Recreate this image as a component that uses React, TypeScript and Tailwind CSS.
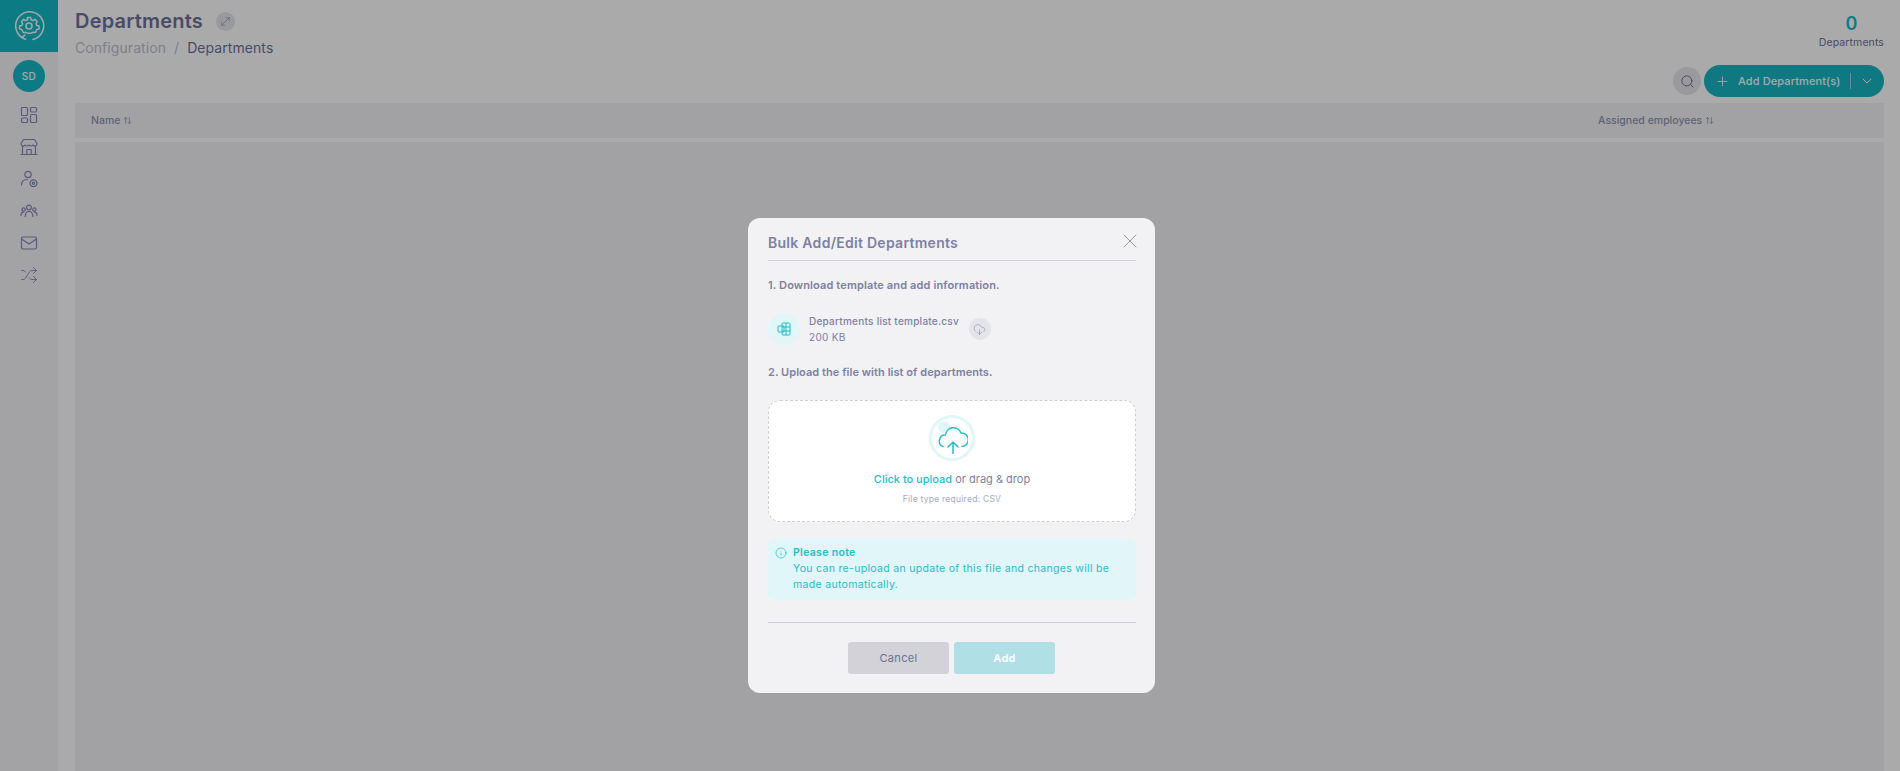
import { ArrowUpDown, ChevronDown, CloudDownload, Info, MoveDiagonal, Plus, Search, Shuffle, X } from 'lucide-react'

const font = { fontFamily: 'Inter, "Open Sans", sans-serif' }

function LogoIcon() {
  return (
    <svg width="32" height="32" viewBox="0 0 32 32" fill="none" stroke="#e4f4f5" strokeWidth="1.5" strokeLinecap="round" strokeLinejoin="round">
      <path d="M9 27.5A14 14 0 1 1 20 29.4" />
      <path d="M12 25l-3 2.6 3.6 1.8" />
      <path d="M14.3 7.5h3.4l.5 2.4 2 .9 2.1-1.3 2.4 2.4-1.3 2.1.8 2 2.4.5v3.2l-2.4.6-.8 2-1 1.2-2-.4-2.2 1h-3.6l-2.1-1-2 .4-1.2-1.2-.8-2-2.4-.6v-3.2l2.4-.5.8-2-1.3-2.1 2.4-2.4 2.1 1.3 2-.9z" transform="translate(16 16) scale(.95) translate(-16 -16.5)" />
      <circle cx="16" cy="16" r="3" />
    </svg>
  )
}

function NavIcon({ children }: { children: React.ReactNode }) {
  return (
    <svg width="18" height="18" viewBox="0 0 18 18" fill="none" stroke="#7c84b2" strokeWidth="1.2" strokeLinecap="round" strokeLinejoin="round">
      {children}
    </svg>
  )
}

function Sidebar() {
  return (
    <aside className="w-[58px] shrink-0 bg-[#eaeaee] flex flex-col items-center">
      <div className="w-full h-[52px] bg-[#14b1be] flex items-center justify-center">
        <LogoIcon />
      </div>
      <div className="mt-[8px] w-[32px] h-[32px] rounded-full bg-[#14b1be] text-[#f2f2f5] text-[10px] font-medium tracking-[0.04em] flex items-center justify-center">
        SD
      </div>
      <div className="mt-[14px] flex flex-col items-center gap-[14px]">
        <NavIcon>
          <rect x="1.5" y="1.5" width="6" height="8" rx="1" />
          <rect x="10.5" y="1.5" width="6" height="4.5" rx="1" />
          <rect x="1.5" y="12" width="6" height="4.5" rx="1" />
          <rect x="10.5" y="8.5" width="6" height="8" rx="1" />
        </NavIcon>
        <NavIcon>
          <path d="M1 16.5h16" />
          <path d="M2.5 8v8.5M15.5 8v8.5" />
          <path d="M3.5 1.5h11l2.5 4v.5a2.2 2.2 0 0 1-4 1 2.5 2.5 0 0 1-4 0 2.5 2.5 0 0 1-4 0 2.2 2.2 0 0 1-4-1v-.5z" />
          <path d="M6.8 16.5v-5h4.4v5" />
        </NavIcon>
        <NavIcon>
          <circle cx="8" cy="4.5" r="3.2" />
          <path d="M1.5 15c0-3.3 2.4-5.5 6-5.5" />
          <circle cx="13.5" cy="13.2" r="3.4" strokeDasharray="1.6 .6" />
          <circle cx="13.5" cy="13.2" r="1.1" />
        </NavIcon>
        <NavIcon>
          <circle cx="9" cy="5.5" r="2.4" />
          <circle cx="3.6" cy="7.5" r="1.7" />
          <circle cx="14.4" cy="7.5" r="1.7" />
          <path d="M5.2 14.5c0-3 1.6-5 3.8-5s3.8 2 3.8 5" />
          <path d="M1 13.5c0-2 1-3.4 2.6-3.4M17 13.5c0-2-1-3.4-2.6-3.4" />
        </NavIcon>
        <NavIcon>
          <rect x="1.5" y="3" width="15" height="12" rx="1.5" />
          <path d="M1.5 5l7.5 5 7.5-5" />
        </NavIcon>
        <Shuffle size={18} strokeWidth={1.2} color="#7c84b2" />
      </div>
    </aside>
  )
}

function SortLabel({ label }: { label: string }) {
  return (
    <span className="flex items-center gap-[3px] text-[10.5px] font-medium text-[#8a8ea8]">
      {label}
      <ArrowUpDown size={9} strokeWidth={2} />
    </span>
  )
}

function Page() {
  return (
    <main className="flex-1 min-w-0 pl-[17px] pr-[16px] flex flex-col">
      <div className="h-[65px] flex justify-between">
        <div>
          <div className="flex items-center gap-[13px] pt-[7px]">
            <h1 className="text-[20px] leading-[28px] font-semibold tracking-[0.01em] text-[#686c94]">Departments</h1>
            <span className="w-[19px] h-[19px] rounded-full bg-[#dcdce2] flex items-center justify-center text-[#8a8ea8]">
              <MoveDiagonal size={13} strokeWidth={1.2} />
            </span>
          </div>
          <div className="mt-[3px] flex items-center text-[14px] leading-[20px] tracking-[0.005em]">
            <span className="text-[#b5b7c8]">Configuration</span>
            <span className="mx-[8px] text-[#b5b7c8]">/</span>
            <span className="text-[#686c94]">Departments</span>
          </div>
        </div>
        <div className="pt-[14px] flex flex-col items-center">
          <span className="text-[18px] leading-[20px] font-semibold text-[#14b1be]">0</span>
          <span className="mt-[1px] text-[10.5px] leading-[16px] tracking-[0.01em] text-[#686c94]">Departments</span>
        </div>
      </div>
      <div className="h-[38px] flex justify-end items-start gap-[3px]">
        <span className="mt-[2px] w-[28px] h-[28px] rounded-full bg-[#dcdce2] flex items-center justify-center text-[#5b5f7c]">
          <Search size={15} strokeWidth={1.4} />
        </span>
        <button className="w-[180px] h-[32px] rounded-full bg-[#17adb9] flex items-center pl-[11px] text-[#e8f5f6]">
          <Plus size={15} strokeWidth={1.4} />
          <span className="ml-[8px] text-[11px] font-medium tracking-[0.01em] whitespace-nowrap">Add Department(s)</span>
          <span className="ml-[10px] w-px h-[16px] bg-[#7fd3da]" />
          <ChevronDown size={16} strokeWidth={1.5} className="ml-[8px]" />
        </button>
      </div>
      <div className="h-[35px] shrink-0 bg-[#e8e8ec] flex items-center justify-between pl-[16px]">
        <SortLabel label="Name" />
        <div className="w-[286px]">
          <SortLabel label="Assigned employees" />
        </div>
      </div>
      <div className="mt-[4px] flex-1 bg-[#e8e8ec]" />
    </main>
  )
}

function Modal() {
  return (
    <div className="fixed inset-0 bg-black/30 flex justify-center pt-[218px] pl-[3px]">
      <div className="w-[407px] h-[475px] rounded-[12px] bg-[#f2f2f5] pl-[20px] pr-[19px]">
        <div className="h-[43px] border-b border-[#d0d0d8] flex items-center justify-between">
          <h2 className="pt-[6px] text-[14px] font-semibold tracking-[0.02em] text-[#7c80a4]">Bulk Add/Edit Departments</h2>
          <X size={24} strokeWidth={0.8} className="mt-[3px] -mr-[6px] text-[#7c80a4]" />
        </div>
        <p className="mt-[16px] text-[11px] leading-[16px] font-semibold tracking-[0.012em] text-[#7c80a4]">1. Download template and add information.</p>
        <div className="mt-[20px] flex items-center">
          <span className="w-[32px] h-[32px] rounded-full bg-[#e0f6f8] flex items-center justify-center">
            <svg width="14" height="14" viewBox="0 0 14 14" fill="none" stroke="#1fbfcc" strokeWidth="1">
              <rect x="5" y="1" width="8" height="12" rx="1" />
              <path d="M5 5h8M5 9h8M9 1v12" />
              <rect x="1" y="4" width="6" height="6" rx=".5" />
            </svg>
          </span>
          <div className="ml-[9px]">
            <p className="text-[10px] leading-[16px] font-medium tracking-[0.025em] text-[#7c80a4]">Departments list template.csv</p>
            <p className="text-[10px] leading-[16px] tracking-[0.03em] text-[#7c80a4]">200 KB</p>
          </div>
          <span className="ml-[10px] w-[22px] h-[22px] rounded-full bg-[#e4e4ea] flex items-center justify-center text-[#7c80a4]">
            <CloudDownload size={13} strokeWidth={1} />
          </span>
        </div>
        <p className="mt-[19px] text-[11px] leading-[16px] font-semibold tracking-[0.005em] text-[#7c80a4]">2. Upload the file with list of departments.</p>
        <div className="mt-[20px] h-[122px] rounded-[12px] border border-dashed border-[#cfcfdb] bg-white flex flex-col items-center pt-[14px]">
          <span className="w-[46px] h-[46px] rounded-full border-[3px] border-[#e0f6f8] flex items-center justify-center">
            <svg width="32" height="32" viewBox="0 0 32 32" fill="none" stroke="#1fbfcc" strokeWidth="1.5" strokeLinecap="round" strokeLinejoin="round" className="shrink-0">
              <circle cx="8" cy="5" r="6" fill="#e0f6f8" stroke="none" />
              <path d="M7 24.5A6 6 0 0 1 9.5 13A8 8 0 0 1 25 11A6.5 6.5 0 0 1 26 24.5" />
              <path d="M17 32V20M12 25l5-5 5 5" />
            </svg>
          </span>
          <p className="mt-[10px] text-[11px] leading-[16px] text-[#7c80a4]">
            <span className="font-medium text-[#1fbfcc]">Click to upload</span> or drag &amp; drop
          </p>
          <p className="mt-[6px] text-[8.5px] leading-[12px] tracking-[0.03em] text-[#a6a9c4]">File type required: CSV</p>
        </div>
        <div className="mt-[17px] h-[61px] rounded-[6px] bg-[#e0f6f8] flex pl-[7px] pt-[6px] text-[#1fbfcc]">
          <Info size={12} strokeWidth={1.4} className="mt-[2px] shrink-0" />
          <div className="ml-[6px] text-[10.5px] leading-[16px] tracking-[0.03em]">
            <p className="font-semibold">Please note</p>
            <p>You can re-upload an update of this file and changes will be<br />made automatically.</p>
          </div>
        </div>
        <div className="mt-[22px] border-t border-[#cfcfe0]" />
        <div className="mt-[19px] pr-[1px] flex justify-center gap-[5px]">
          <button className="w-[101px] h-[32px] rounded-[3px] bg-[#d2d2d8] text-[11px] font-normal tracking-[0.03em] text-[#6c7096]">Cancel</button>
          <button className="w-[101px] h-[32px] rounded-[3px] bg-[#b0e0e6] text-[11px] font-semibold tracking-[0.03em] text-white">Add</button>
        </div>
      </div>
    </div>
  )
}

export default function App() {
  return (
    <div className="h-screen overflow-hidden flex bg-[#f4f4f4]" style={font}>
      <Sidebar />
      <Page />
      <Modal />
    </div>
  )
}
